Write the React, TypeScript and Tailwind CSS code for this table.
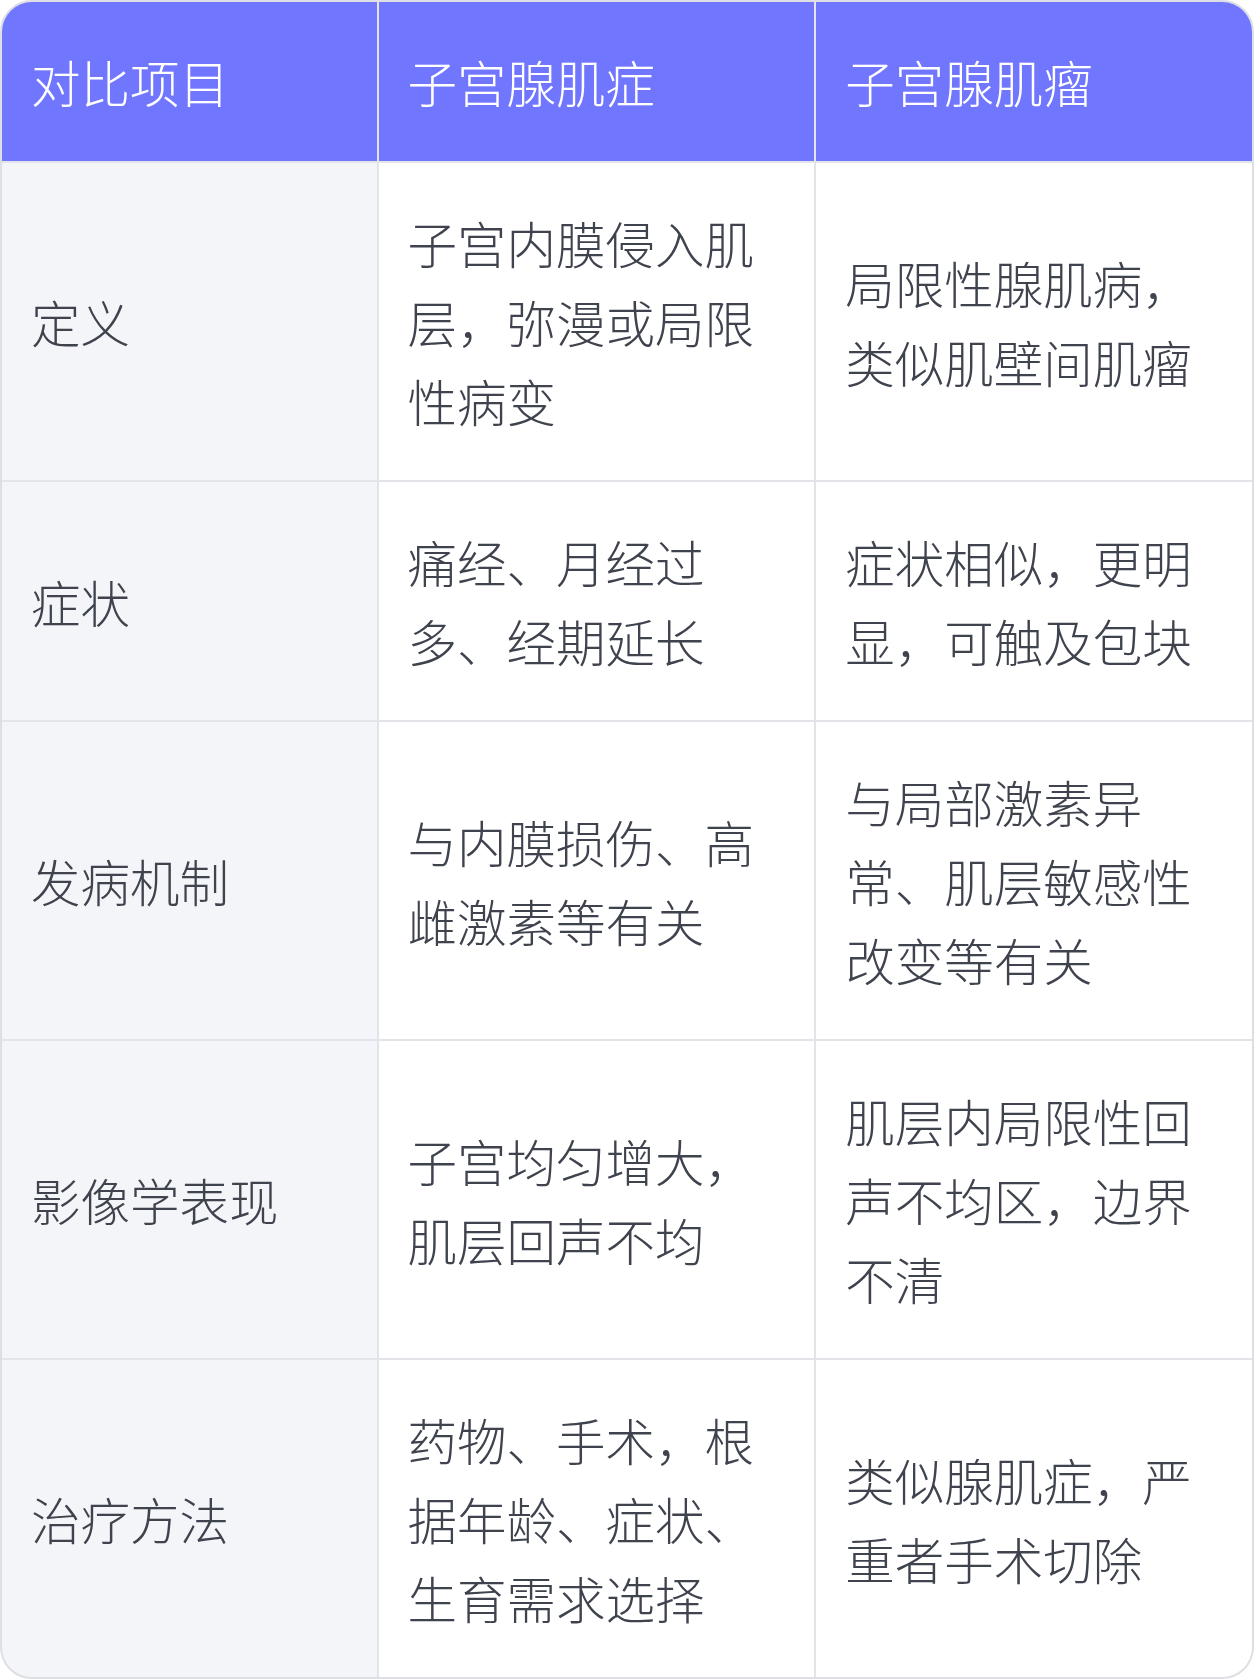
const rows: [string, string, string][] = [
  ['定义', '子宫内膜侵入肌层，弥漫或局限性病变', '局限性腺肌病，类似肌壁间肌瘤'],
  ['症状', '痛经、月经过多、经期延长', '症状相似，更明显，可触及包块'],
  ['发病机制', '与内膜损伤、高雌激素等有关', '与局部激素异常、肌层敏感性改变等有关'],
  ['影像学表现', '子宫均匀增大，肌层回声不均', '肌层内局限性回声不均区，边界不清'],
  ['治疗方法', '药物、手术，根据年龄、症状、生育需求选择', '类似腺肌症，严重者手术切除'],
];

const headers = ['对比项目', '子宫腺肌症', '子宫腺肌瘤'];

export default function App() {
  return (
    <div
      className="w-[1254px] bg-white"
      style={{ fontFamily: '"Noto Sans CJK SC", "Noto Sans", sans-serif' }}
    >
      <div className="overflow-hidden rounded-[32px] border-2 border-[#dedfe4] bg-[#e3e4e9]">
        <div className="grid grid-cols-[374fr_435fr_435fr] gap-[2px] font-light">
          {headers.map((h) => (
            <div
              key={h}
              className="flex items-center bg-[#7176ff] px-[29px] py-10 text-[49.5px] leading-[79px] text-white"
            >
              {h}
            </div>
          ))}
          {rows.map((r) => (
            <>
              <div
                key={r[0]}
                className="flex items-center bg-[#f4f5f9] px-[29px] py-10 text-[49.5px] leading-[79px] text-[#3f434e]"
              >
                {r[0]}
              </div>
              <div className="flex items-center bg-white px-[29px] py-10 text-[49.5px] leading-[79px] text-[#3f434e]">
                {r[1]}
              </div>
              <div className="flex items-center bg-white px-[29px] py-10 text-[49.5px] leading-[79px] text-[#3f434e]">
                {r[2]}
              </div>
            </>
          ))}
        </div>
      </div>
    </div>
  );
}
